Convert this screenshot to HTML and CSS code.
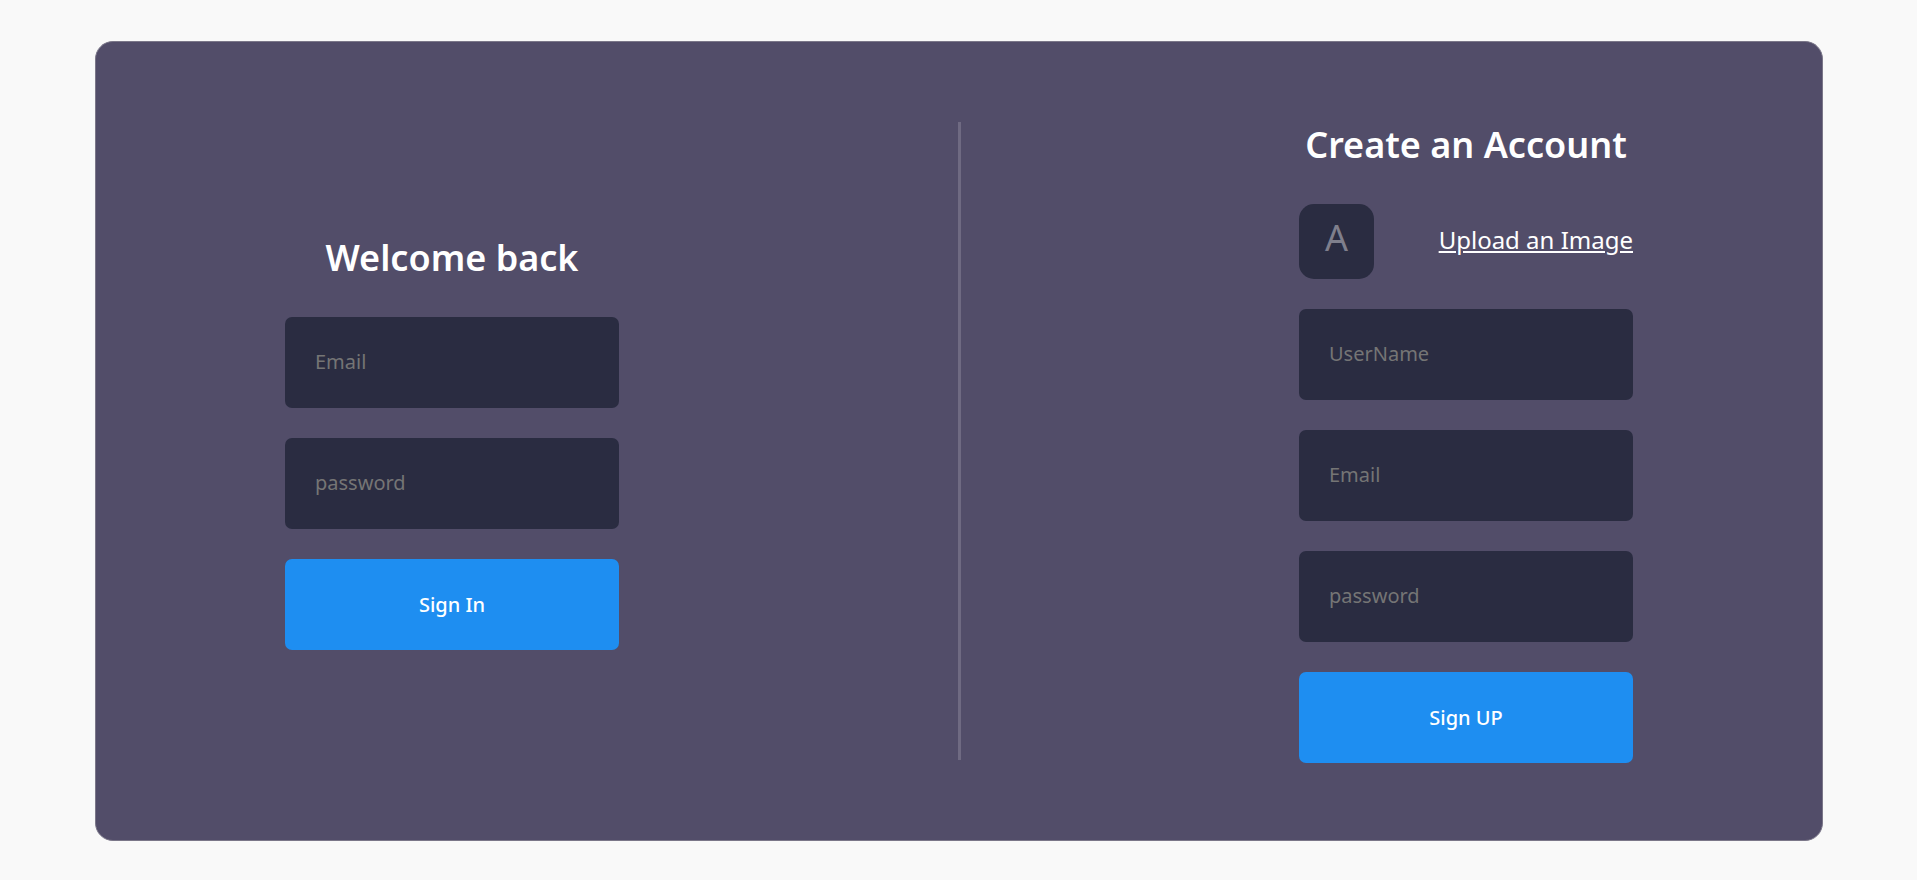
FILE: index.html
```html
<!DOCTYPE html>
<html lang="en">
<head>
<meta charset="utf-8">
<title>Sign in or create an account</title>
<meta name="viewport" content="width=device-width, initial-scale=1">
<link rel="stylesheet" href="styles.css">
</head>
<body>
<main class="card">
  <form class="form">
    <h1 class="title">Welcome back</h1>
    <input class="field" type="email" placeholder="Email" aria-label="Email">
    <input class="field" type="password" placeholder="password" aria-label="Password">
    <button class="submit" type="submit">Sign In</button>
  </form>
  <div class="divider"></div>
  <form class="form">
    <h1 class="title">Create an Account</h1>
    <div class="upload">
      <span class="avatar">A</span>
      <a class="upload-link" href="#">Upload an Image</a>
    </div>
    <input class="field" type="text" placeholder="UserName" aria-label="User name">
    <input class="field" type="email" placeholder="Email" aria-label="Email">
    <input class="field" type="password" placeholder="password" aria-label="Password">
    <button class="submit" type="submit">Sign UP</button>
  </form>
</main>
</body>
</html>
```
FILE: styles.css
```css
* {
  box-sizing: border-box;
}

body {
  margin: 0;
  min-height: 100vh;
  padding: 41px 94px 39px 95px;
  display: flex;
  background: #f9f9f9;
  font-family: "Noto Sans", "Open Sans", sans-serif;
  color: #fff;
}

.card {
  flex: 1;
  display: flex;
  align-items: center;
  justify-content: space-between;
  padding: 0 189px;
  border: 1px solid #7b7789;
  border-radius: 18px;
  background: #524d69;
}

.form {
  width: 334px;
  display: flex;
  flex-direction: column;
  gap: 30px;
}

.title {
  margin: 0;
  padding-bottom: 4px;
  font-size: 36px;
  line-height: 50px;
  font-weight: 600;
  text-align: center;
  white-space: nowrap;
}

.upload {
  display: flex;
  align-items: center;
  justify-content: space-between;
}

.avatar {
  width: 75px;
  height: 75px;
  padding-bottom: 6px;
  display: flex;
  align-items: center;
  justify-content: center;
  border-radius: 15px;
  background: #2a2c41;
  color: #7f7f8c;
  font-size: 36px;
  line-height: 50px;
}

.upload-link {
  padding-bottom: 4px;
  color: #fff;
  font-size: 24px;
  text-decoration: underline;
}

.field,
.submit {
  width: 100%;
  height: 91px;
  border: 0;
  border-radius: 7px;
  font-family: inherit;
  font-size: 20px;
}

.field {
  padding: 0 30px 1px;
  background: #2a2c41;
  color: #fff;
}

.field::placeholder {
  color: #757575;
}

.submit {
  background: #1e8ef1;
  color: #fff;
  font-weight: 500;
}

.divider {
  align-self: stretch;
  width: 3px;
  margin: 80px 0;
  background: #6f6a82;
}
```
